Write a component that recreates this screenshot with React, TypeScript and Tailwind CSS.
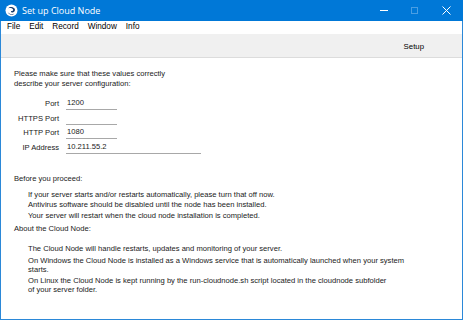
import React from "react";

const font = { fontFamily: '"Liberation Sans", Arial, sans-serif' };

function Field({ label, value, w }: { label: string; value: string; w: string }) {
  return (
    <div className="flex h-[14.5px] items-end">
      <div className="w-[45px] pb-[1px] text-right leading-[10px]">{label}</div>
      <div className={`ml-[7px] border-b border-[#a8a8a8] pb-[1px] pl-[1px] leading-[10px] ${w}`}>{value}</div>
    </div>
  );
}

export default function App() {
  return (
    <div
      className="flex h-[320px] w-[463px] flex-col overflow-hidden bg-[#2b88d8] px-[1px] pb-[1px] text-[7.6px] text-[#1a1a1a]"
      style={font}
    >
      {/* Title bar */}
      <div className="-mx-[1px] flex h-[21px] shrink-0 items-center bg-[#0078d7] text-white">
        <svg width="13" height="13" viewBox="0 0 13 13" className="ml-[5px]">
          <circle cx="6.5" cy="6.5" r="6" fill="#ffffff" />
          <path d="M3.2 4.2 C4.6 2.4 8.2 2.6 9.6 4.6 C10.6 6.2 9.6 8.4 7.6 8.6 C6.4 8.7 5.6 7.8 6.2 7 C7.4 7.4 8.6 6.4 8 5.2 C7 3.8 4.8 3.8 3.2 4.2 Z" fill="#1c3f6e" />
          <path d="M2.6 7.6 C3.6 10.2 7.2 11 9.4 9.4 C8 11.6 3.6 11.4 2.6 7.6 Z" fill="#1c3f6e" />
        </svg>
        <span className="ml-[4px] text-[9px]" style={{ fontFamily: '"Open Sans", "Noto Sans", sans-serif' }}>
          Set up Cloud Node
        </span>
        <div className="ml-auto flex h-full items-center">
          <div className="flex w-[30px] justify-center">
            <div className="h-[1px] w-[8px] bg-white" />
          </div>
          <div className="flex w-[30px] justify-center">
            <div className="h-[7px] w-[7px] border border-[#4a9ee3]" />
          </div>
          <div className="flex w-[34px] justify-center">
            <svg width="9" height="9" viewBox="0 0 9 9">
              <path d="M0.5 0.5 L8.5 8.5 M8.5 0.5 L0.5 8.5" stroke="#ffffff" strokeWidth="1" />
            </svg>
          </div>
        </div>
      </div>

      <div className="flex flex-1 flex-col bg-white">
        {/* Menu bar */}
        <div className="flex h-[13px] shrink-0 items-center gap-[9px] pl-[6px] text-[8.2px] text-black">
          <span>File</span>
          <span>Edit</span>
          <span>Record</span>
          <span>Window</span>
          <span>Info</span>
        </div>

        {/* Toolbar */}
        <div className="flex h-[24px] shrink-0 items-center justify-end border-b border-[#dcdcdc] bg-[#f0f0f0] pr-[38px] text-[7.8px] text-black">
          <span className="mt-[2px]">Setup</span>
        </div>

        {/* Content */}
        <div className="flex flex-col pl-[13px] pt-[11px]">
          <div className="leading-[9.5px]">
            <div>Please make sure that these values correctly</div>
            <div>describe your server configuration:</div>
          </div>

          <div className="mt-[7.5px] flex flex-col">
            <Field label="Port" value="1200" w="w-[51px]" />
            <Field label="HTTPS Port" value="" w="w-[51px]" />
            <Field label="HTTP Port" value="1080" w="w-[51px]" />
            <Field label="IP Address" value="10.211.55.2" w="w-[135px]" />
          </div>

          <div className="mt-[20.5px] leading-[10.5px]">Before you proceed:</div>
          <div className="mt-[5px] flex flex-col pl-[14px] leading-[10.5px]">
            <div>If your server starts and/or restarts automatically, please turn that off now.</div>
            <div>Antivirus software should be disabled until the node has been installed.</div>
            <div>Your server will restart when the cloud node installation is completed.</div>
          </div>

          <div className="mt-[3px] leading-[10.5px]">About the Cloud Node:</div>
          <div className="mt-[9.5px] flex flex-col gap-[2.5px] pl-[14px] leading-[9px]">
            <div>The Cloud Node will handle restarts, updates and monitoring of your server.</div>
            <div>
              On Windows the Cloud Node is installed as a Windows service that is automatically launched when your system
              <br />
              starts.
            </div>
            <div>
              On Linux the Cloud Node is kept running by the run-cloudnode.sh script located in the cloudnode subfolder
              <br />
              of your server folder.
            </div>
          </div>
        </div>
      </div>
    </div>
  );
}
